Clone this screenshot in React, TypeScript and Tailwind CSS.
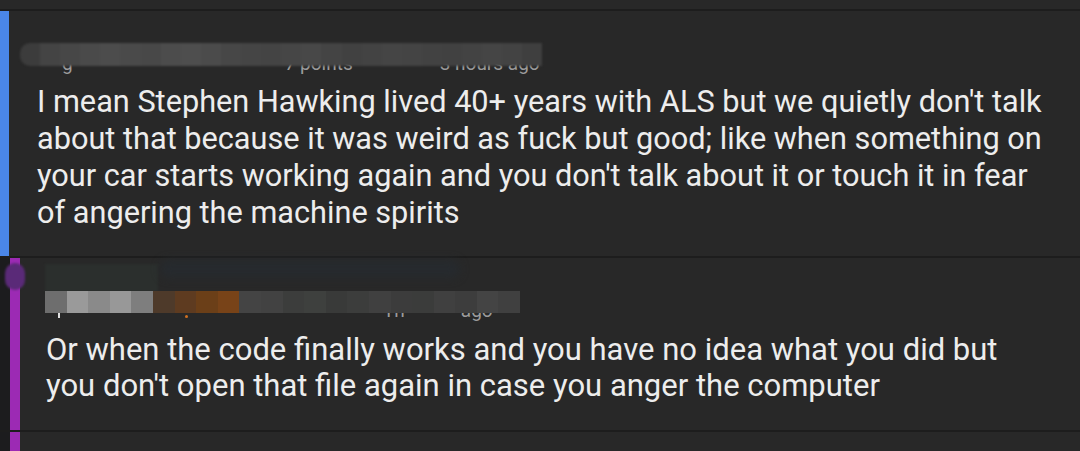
import React from "react";

const strip1 = ["#3c3c3c","#444444","#474747","#4a4a4a","#4c4c4c","#4a4a4a","#484848","#4c4c4c","#4e4e4e","#4b4b4b","#474747","#454545","#444444","#464646","#484848","#444444","#414141","#434343","#454545","#444444","#424242","#414141","#434343","#454545","#434343","#3f3f3f"];
const strip2 = ["#6e6e6e","#9a9a9a","#8a8a8a","#989898","#7e7e7e","#4e3a2a","#5e3b20","#6b3f18","#784318","#444444","#424242","#3c3d3c","#3e403e","#393a39","#3c3d3c","#404040","#3c3c3c","#3b3c3b","#404040","#3d3d3d","#444444","#404040"];

const lines1 = [
  "I mean Stephen Hawking lived 40+ years with ALS but we quietly don't talk",
  "about that because it was weird as fuck but good; like when something on",
  "your car starts working again and you don't talk about it or touch it in fear",
  "of angering the machine spirits",
];
const lines2 = [
  "Or when the code finally works and you have no idea what you did but",
  "you don't open that file again in case you anger the computer",
];

export default function App() {
  return (
    <div className="w-[1080px] h-[451px] bg-[#282828] overflow-hidden flex flex-col" style={{ fontFamily: "Roboto, 'Liberation Sans', sans-serif" }}>
      <div className="h-[9px] shrink-0 bg-[#282828]" />
      <div className="h-[2px] shrink-0 bg-[#1d1d1d]" />
      {/* Comment 1 */}
      <div className="flex h-[245px] shrink-0">
        <div className="w-[9px] bg-[#4a86e8] shrink-0" />
        <div className="flex-1 pl-[28px] pt-[32px]">
          <div className="relative h-[40px] -ml-[17px]">
            <div className="absolute left-[0px] top-[9px] text-[19px] text-[#9c9c9c] leading-[24px] whitespace-nowrap">
              <span className="ml-[42px]">g</span>
              <span className="ml-[212px]">7 points</span>
              <span className="ml-[87px]">3 hours ago</span>
            </div>
            <div className="absolute left-[0px] top-[0px] h-[23px] w-[522px] flex rounded-l-[10px] overflow-hidden blur-[1px]">
              {strip1.map((c, i) => (
                <div key={i} className="h-full w-[20.1px] shrink-0" style={{ backgroundColor: c }} />
              ))}
            </div>
          </div>
          <p className="text-[30.7px] leading-[37px] text-[#ededed] whitespace-nowrap">
            {lines1.map((l, i) => (
              <span key={i} className="block">{l}</span>
            ))}
          </p>
        </div>
      </div>
      <div className="h-[2px] shrink-0 bg-[#1d1d1d]" />
      {/* Comment 2 */}
      <div className="flex h-[172px] shrink-0">
        <div className="w-[10px] bg-[#1c1c1e] shrink-0" />
        <div className="relative w-[10px] bg-[#9c2ab4] shrink-0">
          <div className="absolute -left-[5px] top-[5px] w-[20px] h-[27px] rounded-full bg-[#5a2a78] blur-[1px]" />
        </div>
        <div className="flex-1 pl-[26px] pt-[4px]">
          <div className="relative h-[70px] -ml-[1px]">
            <div className="absolute left-[0px] top-[2px] h-[28px] w-[113px] bg-[#2b2f2d] blur-[1px]" />
            <div className="absolute left-[115px] top-[-2px] h-[18px] w-[300px] rounded-full bg-[#262a2e] blur-[4px]" />
            <div className="absolute left-[0px] top-[37px] text-[19px] text-[#9c9c9c] leading-[24px] whitespace-nowrap">
              <span className="ml-[338px]">Th</span>
              <span className="ml-[56px]">ago</span>
            </div>
            <div className="absolute left-[13px] top-[50px] h-[6px] w-[2px] bg-[#e0e0e0]" />
            <div className="absolute left-[140px] top-[53px] h-[3px] w-[3px] rounded-full bg-[#d07020]" />
            <div className="absolute left-[0px] top-[29px] h-[22px] w-[475px] flex blur-[0.5px]">
              {strip2.map((c, i) => (
                <div key={i} className="h-full w-[21.6px] shrink-0" style={{ backgroundColor: c }} />
              ))}
            </div>
          </div>
          <p className="text-[31px] leading-[36px] text-[#ededed] whitespace-nowrap">
            {lines2.map((l, i) => (
              <span key={i} className="block">{l}</span>
            ))}
          </p>
        </div>
      </div>
      <div className="h-[2px] shrink-0 bg-[#1d1d1d]" />
      <div className="flex flex-1">
        <div className="w-[10px] bg-[#1c1c1e] shrink-0" />
        <div className="w-[10px] bg-[#9c2ab4] shrink-0" />
      </div>
    </div>
  );
}
